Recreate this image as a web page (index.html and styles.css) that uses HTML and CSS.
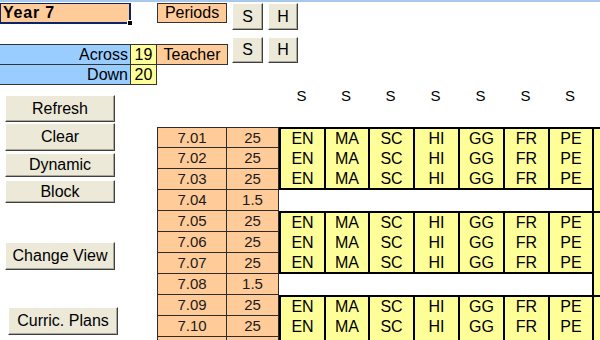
FILE: index.html
```html
<!DOCTYPE html>
<html>
<head>
<meta charset="utf-8">
<link rel="stylesheet" href="styles.css">
</head>
<body>
<div class="topline"></div>
<div class="hdr1">
  <div class="year">Year 7</div>
  <div class="label periods">Periods</div>
  <div class="btn sq">S</div>
  <div class="btn sq h">H</div>
</div>
<div class="hdr2">
  <div class="dims">
    <div class="dc blue">Across</div><div class="dc yel">19</div><div class="dc org">Teacher</div>
    <div class="dc blue">Down</div><div class="dc yel">20</div>
  </div>
  <div class="btn sq sq2">S</div>
  <div class="btn sq sq2 h">H</div>
</div>
<div class="main">
  <div class="side">
    <div class="btn b-refresh">Refresh</div>
    <div class="btn b-clear">Clear</div>
    <div class="btn b-dynamic">Dynamic</div>
    <div class="btn b-block">Block</div>
    <div class="btn b-change">Change View</div>
    <div class="btn b-curric">Curric. Plans</div>
  </div>
  <div class="right">
    <div class="heads">
      <span class="s1">S</span><span>S</span><span>S</span><span>S</span><span>S</span><span>S</span><span>S</span>
    </div>
    <div class="grid">
      <div class="o rm f">7.01</div><div class="o f">25</div>
      <div class="subj"><div>EN</div><div>EN</div><div>EN</div></div>
      <div class="subj"><div>MA</div><div>MA</div><div>MA</div></div>
      <div class="subj"><div>SC</div><div>SC</div><div>SC</div></div>
      <div class="subj"><div>HI</div><div>HI</div><div>HI</div></div>
      <div class="subj"><div>GG</div><div>GG</div><div>GG</div></div>
      <div class="subj"><div>FR</div><div>FR</div><div>FR</div></div>
      <div class="subj"><div>PE</div><div>PE</div><div>PE</div></div>
      <div class="far"></div>
      <div class="o rm">7.02</div><div class="o">25</div>
      <div class="o rm">7.03</div><div class="o">25</div>
      <div class="o rm">7.04</div><div class="o">1.5</div>
      <div class="gap"></div>
      <div class="o rm">7.05</div><div class="o">25</div>
      <div class="subj"><div>EN</div><div>EN</div><div>EN</div></div>
      <div class="subj"><div>MA</div><div>MA</div><div>MA</div></div>
      <div class="subj"><div>SC</div><div>SC</div><div>SC</div></div>
      <div class="subj"><div>HI</div><div>HI</div><div>HI</div></div>
      <div class="subj"><div>GG</div><div>GG</div><div>GG</div></div>
      <div class="subj"><div>FR</div><div>FR</div><div>FR</div></div>
      <div class="subj"><div>PE</div><div>PE</div><div>PE</div></div>
      <div class="far"></div>
      <div class="o rm">7.06</div><div class="o">25</div>
      <div class="o rm">7.07</div><div class="o">25</div>
      <div class="o rm">7.08</div><div class="o">1.5</div>
      <div class="gap"></div>
      <div class="o rm">7.09</div><div class="o">25</div>
      <div class="subj"><div>EN</div><div>EN</div></div>
      <div class="subj"><div>MA</div><div>MA</div></div>
      <div class="subj"><div>SC</div><div>SC</div></div>
      <div class="subj"><div>HI</div><div>HI</div></div>
      <div class="subj"><div>GG</div><div>GG</div></div>
      <div class="subj"><div>FR</div><div>FR</div></div>
      <div class="subj"><div>PE</div><div>PE</div></div>
      <div class="far"></div>
      <div class="o rm">7.10</div><div class="o">25</div>
      <div class="o rm"></div><div class="o"></div>
    </div>
  </div>
</div>
</body>
</html>
```

FILE: styles.css
```css
html, body {
  margin: 0;
  padding: 0;
  overflow: hidden;
  background: #fff;
}
body {
  width: 600px;
  height: 340px;
  font-family: "Liberation Sans", Arial, sans-serif;
  color: #000;
}
.topline {
  height: 2px;
  background: #a9c9ec;
}
.hdr1 {
  display: flex;
  align-items: flex-start;
  margin-top: 1px;
  height: 27px;
}
.year {
  position: relative;
  box-sizing: border-box;
  width: 131px;
  height: 21px;
  background: #fc9;
  border: 1px solid #0a246a;
  border-right-width: 2px;
  border-bottom-width: 2px;
  font-weight: bold;
  font-size: 16px;
  letter-spacing: 0.8px;
  line-height: 18px;
  padding-left: 2px;
}
.year::after {
  content: "";
  position: absolute;
  right: -4px;
  bottom: -4px;
  width: 4px;
  height: 4px;
  background: #000;
  border: 1px solid #fff;
}
.label {
  box-sizing: border-box;
  background: #fc9;
  border: 1px solid #333;
  font-size: 16px;
  line-height: 18px;
  text-align: center;
}
.periods {
  margin-left: 26px;
  width: 70px;
  height: 20px;
}
.btn {
  box-sizing: border-box;
  background: #ece9d8;
  border: 1px solid;
  border-color: #fff #404040 #404040 #fff;
  box-shadow: inset -1px -1px 0 #aca899;
  font-size: 16px;
  display: flex;
  align-items: center;
  justify-content: center;
  color: #000;
}
.sq {
  width: 31px;
  height: 27px;
  margin-left: 5px;
}
.sq.h {
  width: 30px;
}
.sq2 {
  height: 26px;
}
.hdr2 {
  display: flex;
  align-items: flex-start;
  margin-top: 7px;
}
.dims {
  display: grid;
  grid-template-columns: 130px 25px 70px;
  grid-auto-rows: 19px;
  gap: 1px;
  margin-top: 8px;
}
.dc {
  box-shadow: 0 0 0 1px #333;
  font-size: 16px;
  line-height: 19px;
}
.blue {
  background: #9cf;
  text-align: right;
  padding-right: 2px;
}
.yel {
  background: #ff9;
  text-align: center;
}
.org {
  background: #fc9;
  text-align: center;
}
.main {
  display: flex;
  margin-top: 2px;
}
.side {
  flex: none;
  width: 157px;
  display: flex;
  flex-direction: column;
  align-items: flex-start;
}
.side .btn {
  width: 110px;
  margin-left: 5px;
}
.b-refresh { margin-top: 9px; height: 27px; }
.b-clear { margin-top: 1px; height: 28px; }
.b-dynamic { margin-top: 2px; height: 24px; }
.b-block { margin-top: 3px; height: 23px; }
.b-change { margin-top: 39px; height: 28px; }
.side .b-curric { margin-top: 37px; height: 28px; margin-left: 8px; }
.right {
  flex: 1;
}
.heads {
  height: 41px;
  box-sizing: border-box;
  padding-top: 1px;
  display: grid;
  grid-template-columns: 70px 52px 45px 44px 45px 45px 45px 45px 44px;
  font-size: 15px;
  line-height: 17px;
  text-align: center;
  color: #000;
}
.heads .s1 {
  grid-column: 3;
}
.grid {
  display: grid;
  grid-template-columns: 70px 52px 45px 44px 45px 45px 45px 45px 44px 8px;
  grid-auto-rows: 21px;
}
.o {
  box-sizing: border-box;
  background: #fc9;
  border-right: 1px solid #2b2b2b;
  border-bottom: 1px solid #2b2b2b;
  font-size: 15px;
  line-height: 20px;
  text-align: center;
  color: #1a1a1a;
}
.o.rm {
  border-left: 1px solid #2b2b2b;
}
.o.f {
  border-top: 1px solid #2b2b2b;
  line-height: 19px;
}
.subj {
  grid-row: span 3;
  box-sizing: border-box;
  background: #ff9;
  border-left: 2px solid #000;
  border-top: 2px solid #000;
  border-bottom: 2px solid #000;
  text-align: center;
  font-size: 16px;
  line-height: 20px;
  color: #000;
}
.gap {
  grid-column: span 7;
  background: #fff;
}
.far {
  grid-row: span 4;
  box-sizing: border-box;
  background: #ff9;
  border-left: 2px solid #000;
  border-top: 2px solid #000;
}
```
